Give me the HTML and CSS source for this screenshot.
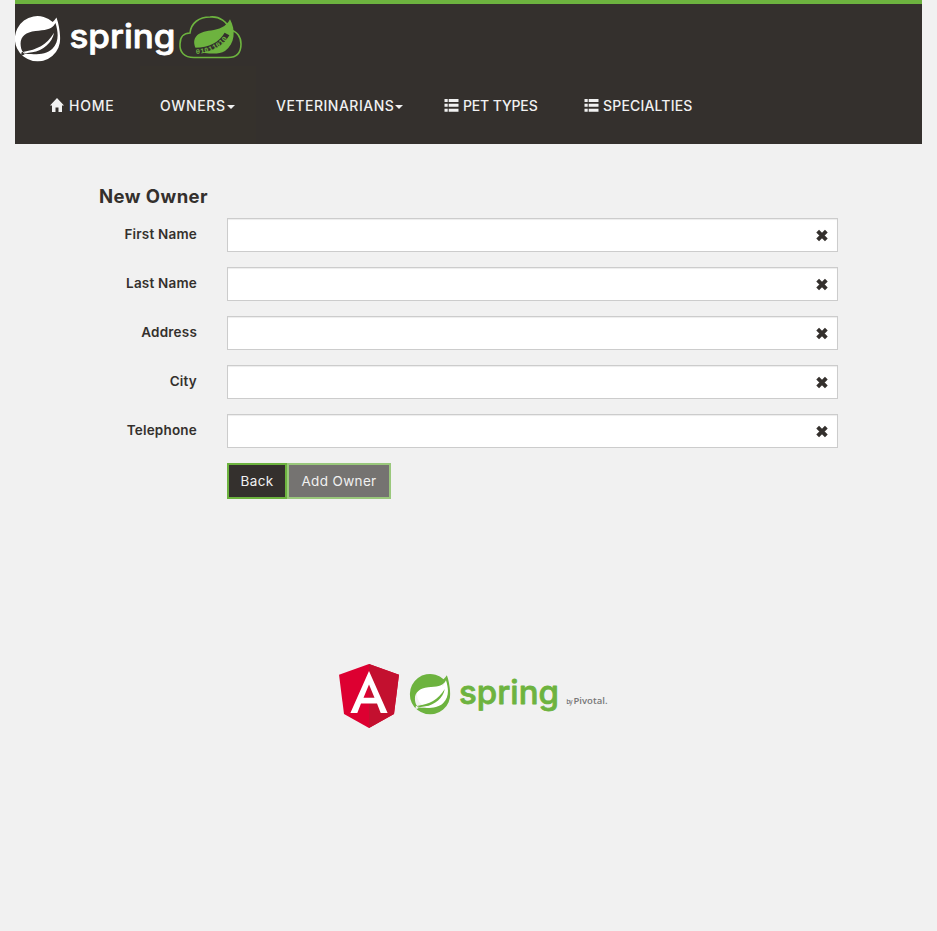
FILE: index.html
```html
<!DOCTYPE html>
<html lang="en">
<head>
<meta charset="utf-8">
<title>Petclinic</title>
<link rel="stylesheet" href="styles.css">
</head>
<body>
<svg class="defs" aria-hidden="true">
  <symbol id="list" viewBox="0 0 14 13"><path d="M0 0h3.2v3H0zM4.2 0H14v3H4.200zM0 4.800h3.200v3H0zM4.200 4.800H14v3H4.200zM0 9.800h3.200v3H0zM4.200 9.800H14v3H4.200z"/></symbol>
  <symbol id="leaf" viewBox="0 0 136 136"><path fill-rule="evenodd" d="M124 6Q119 14 113 19A67 67 0 1 0 135 65Q133 30 124 6ZM121 22C110 44 88 42 62 46C28 50 12 68 20 98Q22 106 28 112L40 114C70 115 95 115 112 98C132 78 130 50 121 22ZM28 107C65 101 95 88 117 51C112 80 85 104 52 109C42 111 35 112 28 111ZM25 107A5 5 0 1 0 25 117A5 5 0 1 0 25 107Z"/></symbol>
</svg>
<header class="navbar">
  <svg class="brand" viewBox="0 0 232 50">
    <use href="#leaf" x="-0.5" y="-0.5" width="46" height="46" fill="#fff"/>
    <text class="word light" x="54.500" y="32" textLength="106" lengthAdjust="spacingAndGlyphs">spring</text>
    <path class="cloud" d="M179 41.500C169 41.500 164.500 36 165 28C165 21 169 17 175 17C176 7 184 1 195 1C205 0 212 6 215 14C222 15 226 21 226 28C226 37 221 41.500 213 41.500Z"/>
    <path fill="#6db33f" d="M215 3.300C221 14 220 28 210 35C205 38 198 38 190 37L181 33C176 22 182 16 196 14.500C204 13.500 211 11 215 3.300Z"/>
    <path class="bits" d="M180 34.500C195 34 206 28.500 212 18"/>
    <path id="arc" fill="none" d="M181 38C197 37 209 30 215 18"/>
    <text class="binary"><textPath href="#arc" textLength="36">01011010</textPath></text>
  </svg>
  <nav class="nav">
    <a class="home"><svg class="house" viewBox="0 0 14 14"><path d="M7 0 14 7.500H12V14H8.500V9.500H5.500V14H2V7.500H0Z"/></svg><span>HOME</span></a>
    <a class="owners"><span>OWNERS</span><i class="caret"></i></a>
    <a class="vets"><span>VETERINARIANS</span><i class="caret"></i></a>
    <a class="types"><svg class="list"><use href="#list"/></svg><span>PET TYPES</span></a>
    <a class="specs"><svg class="list"><use href="#list"/></svg><span>SPECIALTIES</span></a>
  </nav>
</header>
<main class="container">
  <h2>New Owner</h2>
  <form>
    <div class="row"><label>First Name</label><div class="field"><svg viewBox="0 0 12 12"><path d="M2 2 10 10M10 2 2 10"/></svg></div></div>
    <div class="row"><label>Last Name</label><div class="field"><svg viewBox="0 0 12 12"><path d="M2 2 10 10M10 2 2 10"/></svg></div></div>
    <div class="row"><label>Address</label><div class="field"><svg viewBox="0 0 12 12"><path d="M2 2 10 10M10 2 2 10"/></svg></div></div>
    <div class="row"><label>City</label><div class="field"><svg viewBox="0 0 12 12"><path d="M2 2 10 10M10 2 2 10"/></svg></div></div>
    <div class="row"><label>Telephone</label><div class="field"><svg viewBox="0 0 12 12"><path d="M2 2 10 10M10 2 2 10"/></svg></div></div>
    <div class="actions"><button type="button" class="back">Back</button><button type="button" class="add">Add Owner</button></div>
  </form>
</main>
<footer>
  <svg class="angular" viewBox="0 0 60 64"><path fill="#dd0031" d="M30 0 60 10.700 55 50 30 64 5 50 0 10.700Z"/><path fill="#c3102f" d="M30 0 60 10.700 55 50 30 64Z"/><path fill="#fff" fill-rule="evenodd" d="M30 7 48.600 49H41.700L38 39.600H22L18.300 49H11.400ZM30 20.500 24.500 33.800H35.500Z"/></svg>
  <svg class="pivotal" viewBox="0 0 200 50">
    <circle cx="21" cy="24" r="14" fill="#fff"/>
    <path fill="#fff" d="M36.500 10 39 24 34 34 20 38Z"/>
    <use href="#leaf" x="-0.5" y="3.500" width="41" height="41" fill="#6db33f"/>
    <text class="word green" x="49" y="34" textLength="100" lengthAdjust="spacingAndGlyphs">spring</text>
    <text class="by" x="156.500" y="33.500" textLength="6">by</text>
    <text class="piv" x="163.500" y="33.500" textLength="34" lengthAdjust="spacingAndGlyphs">Pivotal.</text>
  </svg>
</footer>
</body>
</html>
```
FILE: styles.css
```css
* { box-sizing: border-box; }
body { margin: 0; padding: 0 15px; background: #f1f1f1; color: #34302d; font: 14px/20px Inter, "Open Sans", sans-serif; }
.defs { position: absolute; width: 0; height: 0; }
.navbar { height: 144px; border-top: 4px solid #6db33f; background: #34302d; overflow: hidden; }
.brand { display: block; width: 232px; height: 50px; margin-top: 12px; overflow: visible; }
.word { font: 500 33px Inter, sans-serif; stroke-width: .8; stroke-linejoin: round; }
.light { fill: #fff; stroke: #fff; }
.green { fill: #6db33f; stroke: #6db33f; }
.cloud { fill: none; stroke: #6db33f; stroke-width: 1.6; }
.bits { fill: none; stroke: #34302d; stroke-width: 5.5; }
.binary { font: bold 7px "Liberation Mono", monospace; fill: #6db33f; }
.nav { display: flex; height: 78px; }
.nav a { display: flex; align-items: center; height: 80px; padding-left: 20px; color: #f1f1f1; font-weight: 500; white-space: nowrap; }
.nav a svg { fill: #f1f1f1; flex: none; }
.nav .home { width: 125px; padding-left: 35px; letter-spacing: .75px; }
.nav .owners { width: 116px; background: #35312c; letter-spacing: .65px; }
.nav .vets { width: 168px; letter-spacing: .5px; }
.nav .types { width: 140px; letter-spacing: -.15px; }
.nav .specs { width: 150px; letter-spacing: .18px; }
.nav .house { width: 14px; height: 14px; margin: -2px 5px 0 0; }
.nav .list { width: 15px; height: 13px; margin: -1px 4px 0 0; }
.caret { border: 4px solid transparent; border-top-color: #f1f1f1; border-bottom: 0; margin-left: 1px; margin-top: 2px; }
.container { width: 739px; margin: 42px 0 0 84px; }
h2 { margin: 0 0 12px; font-size: 18.5px; line-height: 20px; font-weight: 700; letter-spacing: .45px; }
.row { display: flex; height: 34px; margin-bottom: 15px; }
label { width: 98px; margin-right: 30px; padding-top: 6px; text-align: right; font-weight: 600; font-size: 13.5px; letter-spacing: .2px; white-space: nowrap; }
.field { display: flex; flex: 1; justify-content: flex-end; align-items: center; padding-right: 8.5px; border: 1px solid #ccc; background: #fff; box-shadow: inset 0 1px 1px rgba(0,0,0,.075); }
.field svg { width: 14px; height: 13px; stroke: #34302d; stroke-width: 3.6; }
.actions { display: flex; padding-left: 128px; }
button { height: 36px; padding: 0 0 1px; border: 2px solid #6db33f; background: #34302d; color: #f1f1f1; font: 13.5px/20px Inter, sans-serif; letter-spacing: .35px; }
.back { width: 60px; }
.add { width: 104px; opacity: .65; }
footer { display: flex; justify-content: flex-start; padding: 165px 0 0 324px; gap: 11px; }
.angular { width: 60px; height: 64px; }
.pivotal { width: 200px; height: 50px; margin-top: 6px; overflow: visible; }
.by { font: 6px Inter, sans-serif; fill: #555; }
.piv { font: 600 9.5px "Open Sans", sans-serif; fill: #777; }
```
